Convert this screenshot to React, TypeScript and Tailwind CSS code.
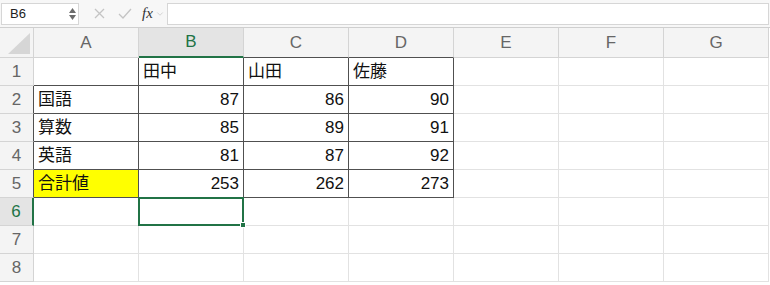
import { ChevronDown } from "lucide-react";

const COLS = ["A", "B", "C", "D", "E", "F", "G"];
const DARK = "#505050";
const GRID = "#e2e2e2";
const GREEN = "#217346";

type Cell = { text?: string; align?: "left" | "right"; fill?: string };

// sheet data, keyed by row then column index
const data: Record<number, Cell[]> = {
  1: [{}, { text: "田中" }, { text: "山田" }, { text: "佐藤" }],
  2: [{ text: "国語" }, { text: "87", align: "right" }, { text: "86", align: "right" }, { text: "90", align: "right" }],
  3: [{ text: "算数" }, { text: "85", align: "right" }, { text: "89", align: "right" }, { text: "91", align: "right" }],
  4: [{ text: "英語" }, { text: "81", align: "right" }, { text: "87", align: "right" }, { text: "92", align: "right" }],
  5: [{ text: "合計値", fill: "#ffff00" }, { text: "253", align: "right" }, { text: "262", align: "right" }, { text: "273", align: "right" }],
};

// table box: A2:A5 and B1:D5 carry thin dark borders
const inTable = (r: number, c: number) =>
  (c === 0 && r >= 2 && r <= 5) || (c >= 1 && c <= 3 && r >= 1 && r <= 5);

const font = { fontFamily: '"Liberation Sans", "Noto Sans CJK JP", sans-serif' };

function Toolbar() {
  return (
    <div className="flex h-[28px] items-center gap-0 border-b border-[#cfcfcf] bg-[#f7f7f7] px-[1px]">
      <div className="flex h-[22px] w-[78px] items-center justify-between border border-[#d6d6d6] bg-white pl-[8px] pr-[2px]">
        <span className="text-[13px] text-[#222]">B6</span>
        <div className="flex flex-col items-center leading-none text-[#777]">
          <svg width="7" height="5" viewBox="0 0 7 5"><path d="M3.5 0 L7 5 L0 5 Z" fill="#6b6b6b" /></svg>
          <svg width="7" height="5" viewBox="0 0 7 5" className="mt-[2px]"><path d="M0 0 L7 0 L3.5 5 Z" fill="#6b6b6b" /></svg>
        </div>
      </div>
      <div className="ml-[13px] flex w-[14px] justify-center">
        <svg width="11" height="11" viewBox="0 0 11 11"><path d="M1 1 L10 10 M10 1 L1 10" stroke="#c4c4c4" strokeWidth="1.3" /></svg>
      </div>
      <div className="ml-[11px] flex w-[16px] justify-center">
        <svg width="14" height="11" viewBox="0 0 14 11"><path d="M1 6 L5 10 L13 1" stroke="#c4c4c4" strokeWidth="1.3" fill="none" /></svg>
      </div>
      <span className="ml-[9px] text-[15px] italic text-[#333]" style={{ fontFamily: '"Liberation Serif", serif' }}>fx</span>
      <ChevronDown className="ml-[2px] h-[10px] w-[10px] text-[#bdbdbd]" strokeWidth={1.5} />
      <div className="ml-[2px] h-[22px] flex-1 border border-[#d6d6d6] bg-white" />
    </div>
  );
}

export default function App() {
  const rows = [1, 2, 3, 4, 5, 6, 7, 8];
  return (
    <div className="h-[285px] w-[770px] overflow-hidden bg-white" style={font}>
      <Toolbar />
      <div className="grid grid-cols-[34px_repeat(7,105px)] grid-rows-[30px_repeat(8,28px)]">
        {/* corner */}
        <div className="flex items-end justify-end border-b border-r border-[#d4d4d4] bg-[#f4f4f4] pb-[3px] pr-[3px]">
          <svg width="22" height="21" viewBox="0 0 22 21"><path d="M22 0 L22 21 L0 21 Z" fill="#d6d6d6" /></svg>
        </div>
        {COLS.map((c, i) => {
          const sel = c === "B";
          const below = i >= 1 && i <= 3;
          return (
            <div
              key={c}
              className={`flex items-center justify-center border-r text-[17px] ${sel ? "bg-[#e4e4e4] text-[#217346]" : "bg-[#f4f4f4] text-[#666]"}`}
              style={{
                borderRightColor: "#d4d4d4",
                borderBottom: sel ? `2px solid ${GREEN}` : `1px solid ${below ? DARK : "#d4d4d4"}`,
              }}
            >
              {c}
            </div>
          );
        })}
        {rows.map((r) => (
          <Row key={r} r={r} />
        ))}
      </div>
    </div>
  );
}

function Row({ r }: { r: number }) {
  const sel = r === 6;
  const rowDark = r >= 2 && r <= 5;
  return (
    <>
      <div
        className={`flex items-center justify-center text-[17px] ${sel ? "bg-[#e4e4e4] text-[#217346]" : "bg-[#f4f4f4] text-[#666]"}`}
        style={{
          borderRight: sel ? `2px solid ${GREEN}` : `1px solid ${rowDark ? DARK : "#d4d4d4"}`,
          borderBottom: "1px solid #d4d4d4",
        }}
      >
        {r}
      </div>
      {COLS.map((_, c) => {
        const cell = data[r]?.[c] ?? {};
        const right = inTable(r, c) || inTable(r, c + 1);
        const bottom = inTable(r, c) || inTable(r + 1, c);
        const active = sel && c === 1;
        return (
          <div
            key={c}
            className={`relative flex items-center px-[4px] pt-[1px] text-[17px] text-[#111] ${cell.align === "right" ? "justify-end" : "justify-start"} ${active ? "z-10" : ""}`}
            style={{
              background: cell.fill,
              borderRight: `1px solid ${right ? DARK : GRID}`,
              borderBottom: `1px solid ${bottom ? DARK : GRID}`,
            }}
          >
            {cell.text}
            {active && (
              <div className="absolute -left-[1px] -top-[1px] h-[29px] w-[106px] border-2 border-[#217346]">
                <div className="absolute -bottom-[4px] -right-[4px] h-[6px] w-[6px] border border-white bg-[#217346]" />
              </div>
            )}
          </div>
        );
      })}
    </>
  );
}
